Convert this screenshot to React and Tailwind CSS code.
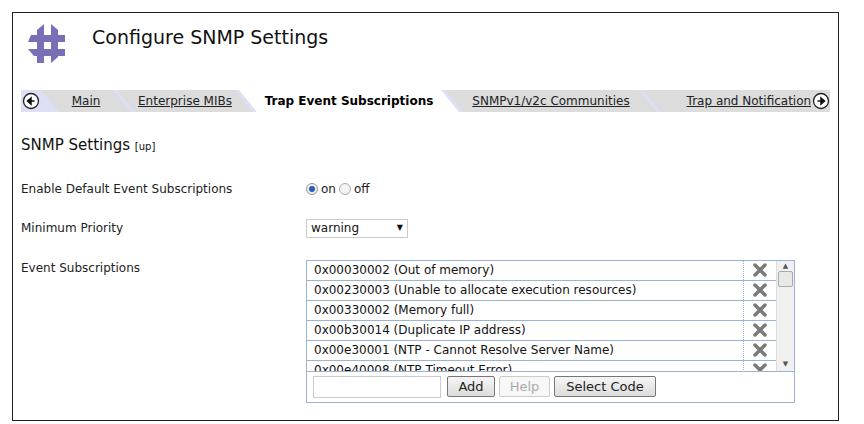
import React from "react";

const rows = [
  "0x00030002 (Out of memory)",
  "0x00230003 (Unable to allocate execution resources)",
  "0x00330002 (Memory full)",
  "0x00b30014 (Duplicate IP address)",
  "0x00e30001 (NTP - Cannot Resolve Server Name)",
  "0x00e40008 (NTP Timeout Error)",
];

const Logo = () => (
  <svg width="37" height="39" viewBox="0 0 37 39">
    <g fill="#7770b6">
      <polygon points="9,6 16,0 16,39 9,39" />
      <polygon points="23,0 30,6 30,33 23,39" />
      <polygon points="3,11 37,11 37,18 0,18" />
      <polygon points="0,25 37,25 37,32 6,32" />
    </g>
  </svg>
);

const XIcon = () => (
  <svg width="14" height="14" viewBox="0 0 14 14">
    <path d="M2 2L12 12M12 2L2 12" stroke="#7a7a7a" strokeWidth="3.5" strokeLinecap="round" />
  </svg>
);

const Arrow = ({ dir }) => (
  <svg width="18" height="18" viewBox="0 0 18 18">
    <circle cx="9" cy="9" r="7.5" fill="white" stroke="#222" strokeWidth="1.3" />
    <path
      d={dir === "l" ? "M12.5 9H7M9 6L5.5 9L9 12Z" : "M5.5 9H11M9 6L12.5 9L9 12Z"}
      stroke="#111"
      strokeWidth="1.5"
      fill="#111"
    />
  </svg>
);

const Tab = ({ children, active, w }) => (
  <div
    className={`h-[22px] flex items-center justify-center shrink-0 -mr-[14px] whitespace-nowrap ${active ? "bg-white font-bold text-black" : "bg-[#dcdcdc] underline text-[#222]"}`}
    style={{ width: w, clipPath: "polygon(0 0, calc(100% - 18px) 0, 100% 100%, 18px 100%)" }}
  >
    {children}
  </div>
);

export default function App() {
  return (
    <div className="w-[864px] h-[424px] bg-white p-3 text-[12px] text-[#222]" style={{ fontFamily: '"DejaVu Sans", Verdana, sans-serif' }}>
      <div className="h-[409px] w-[827px] border border-[#222] overflow-hidden">
        <div className="flex items-start gap-[27px] pl-[15px] pt-[11px] h-[77px]">
          <Logo />
          <div className="text-[19px] text-[#111] -mt-[1px]">Configure SNMP Settings</div>
        </div>
        <div className="mx-[8px] h-[22px] bg-[#dde0f4] flex items-center overflow-hidden relative">
          <div className="shrink-0 px-[1px] z-10"><Arrow dir="l" /></div>
          <div className="flex items-center">
            <Tab w="90px">Main</Tab>
            <Tab w="136px">Enterprise MIBs</Tab>
            <Tab w="220px" active>Trap Event Subscriptions</Tab>
            <Tab w="212px">SNMPv1/v2c Communities</Tab>
            <Tab w="200px"><span className="pl-[18px]">Trap and Notifications</span></Tab>
          </div>
          <div className="absolute right-0 top-[2px] bg-[#dcdcdc] pl-[1px]"><Arrow dir="r" /></div>
        </div>
        <div className="px-[8px] pt-[22px]">
          <div className="text-[15px] text-[#111]">SNMP Settings <span className="text-[10px]">[up]</span></div>
          <div className="flex mt-[22px] h-[20px] items-center">
            <div className="w-[285px]">Enable Default Event Subscriptions</div>
            <label className="flex items-center gap-[3px]">
              <span className="w-[12px] h-[12px] rounded-full border border-[#999] bg-[#eee] flex items-center justify-center"><span className="w-[6px] h-[6px] rounded-full bg-[#2a5db0]" /></span>on
            </label>
            <label className="flex items-center gap-[3px] ml-[3px]">
              <span className="w-[12px] h-[12px] rounded-full border border-[#aaa] bg-[#f4f4f4]" />off
            </label>
          </div>
          <div className="flex mt-[20px] items-center">
            <div className="w-[285px]">Minimum Priority</div>
            <div className="w-[102px] h-[19px] border border-[#ccc] flex items-center justify-between px-[4px] text-[#111]">
              warning<span className="text-[8px]">▼</span>
            </div>
          </div>
          <div className="flex mt-[20px]">
            <div className="w-[285px] pt-[1px]">Event Subscriptions</div>
            <div className="w-[489px] border border-[#9ab4d6] mt-[2px]">
              <div className="flex h-[110px]">
                <div className="flex-1 overflow-hidden">
                  {rows.map((r) => (
                    <div key={r} className="flex h-[20px] border-b border-[#9ab4d6] items-center">
                      <div className="flex-1 pl-[7px] text-[#111] whitespace-nowrap">{r}</div>
                      <div className="w-[33px] h-full flex items-center justify-center border-l border-dotted border-[#9ab4d6]"><XIcon /></div>
                    </div>
                  ))}
                </div>
                <div className="w-[18px] bg-[#f0f0f0] border-l border-[#ddd] flex flex-col items-center text-[7px] text-[#555]">
                  <div className="h-[10px]">▲</div>
                  <div className="w-[15px] h-[16px] bg-[#e8e8e8] border border-[#aaa] rounded-[2px]" />
                  <div className="flex-1" />
                  <div className="h-[12px]">▼</div>
                </div>
              </div>
              <div className="border-t border-[#9ab4d6] h-[31px] flex items-center gap-[4px] pl-[6px]">
                <div className="w-[128px] h-[22px] border border-[#ccc]" />
                <button className="ml-[2px] w-[48px] h-[21px] border border-[#777] rounded-[2px] bg-gradient-to-b from-[#f6f6f6] to-[#dcdcdc] text-[13px]">Add</button>
                <button className="w-[51px] h-[21px] border border-[#ccc] rounded-[2px] bg-[#f7f7f7] text-[#aaa] text-[13px]">Help</button>
                <button className="w-[102px] h-[21px] border border-[#777] rounded-[2px] bg-gradient-to-b from-[#f6f6f6] to-[#dcdcdc] text-[13px]">Select Code</button>
              </div>
            </div>
          </div>
        </div>
      </div>
    </div>
  );
}
